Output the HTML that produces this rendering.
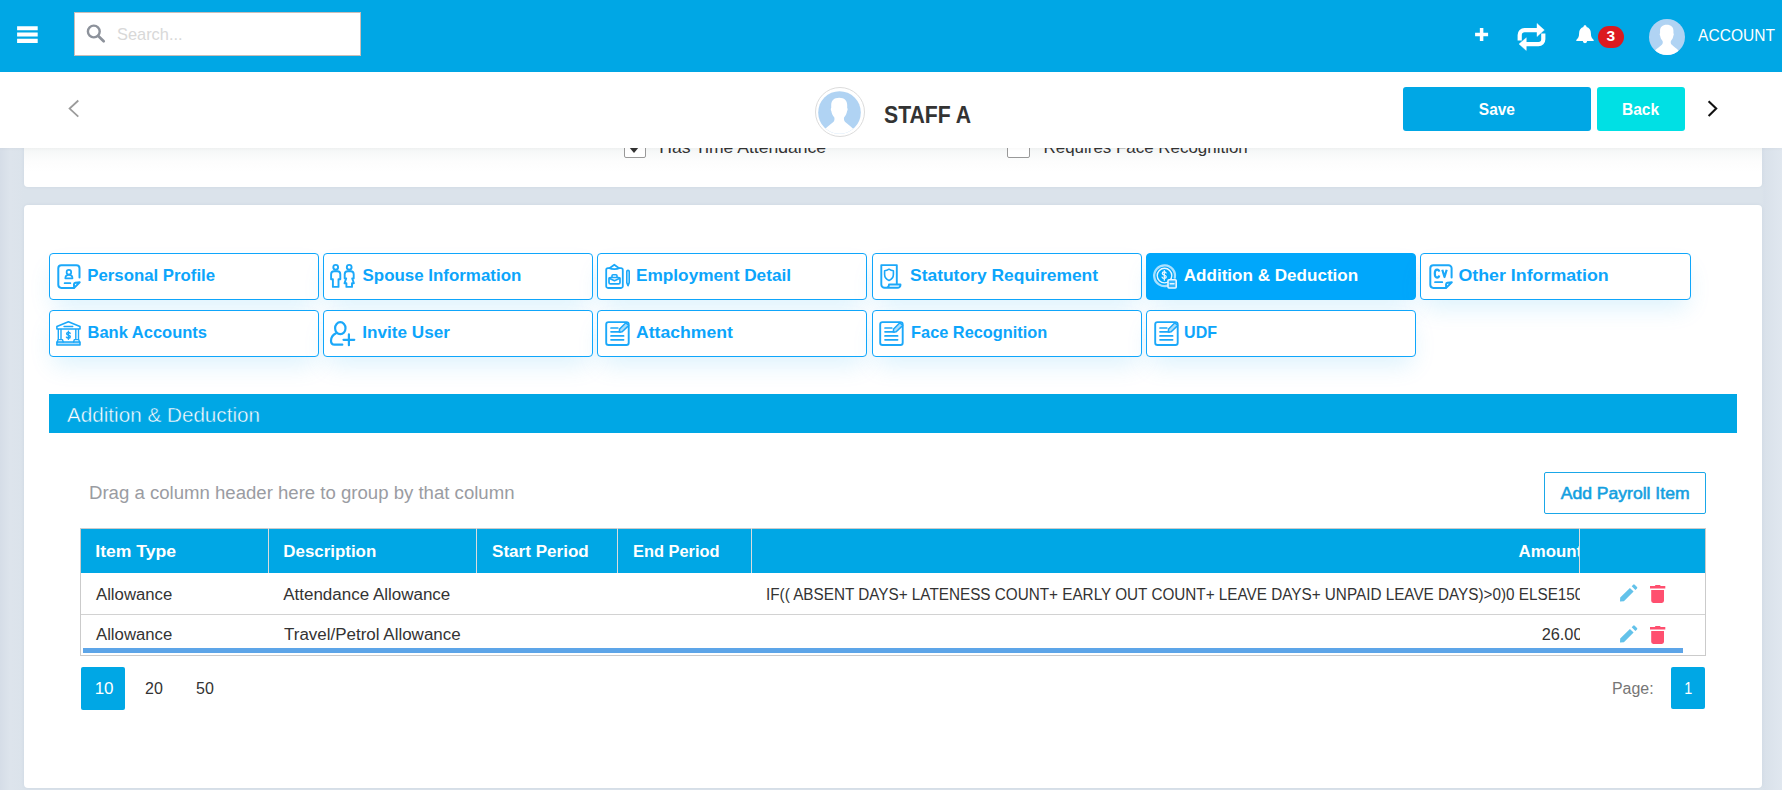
<!DOCTYPE html>
<html>
<head>
<meta charset="utf-8">
<style>
*{box-sizing:border-box;margin:0;padding:0}
html,body{width:1782px;height:790px;overflow:hidden}
body{font-family:"Liberation Sans",sans-serif;background:#dbe3eb;position:relative;color:#333}
.abs{position:absolute}
#bg{left:0;top:0;width:1782px;height:790px;background:linear-gradient(90deg,#d5dde7 0px,#dde4ec 10px,#dbe3eb 24px,#dbe3eb 1762px,#d9e1ea 1764px,#e0e7ef 1782px)}
#top{left:0;top:0;width:1782px;height:72px;background:#00a7e5}
#search{left:74px;top:12px;width:287px;height:44px;background:#fff;border:1px solid #c9bdb9}
#search span{position:absolute;left:42px;top:11px;font-size:17px;color:#d8d8d8;line-height:20px}
#sub{left:0;top:72px;width:1782px;height:76px;background:#fff;box-shadow:0 1px 3px rgba(0,0,0,.035);z-index:5}
.card{background:#fff;border-radius:4px;box-shadow:0 0 3px rgba(110,135,170,.14)}
#card1{left:24px;top:100px;width:1738px;height:87px;background:linear-gradient(#f4f6f6 48px,#fdfdfd 62px,#fff 72px)}
#card2{left:24px;top:205px;width:1738px;height:583px}
.btn{position:absolute;color:#fff;font-weight:bold;font-size:16px;text-align:center;border-radius:3px}
#save{left:1403px;top:87px;width:188px;height:44px;line-height:44px;background:#00a7e5}
#back{left:1597px;top:87px;width:88px;height:44px;line-height:44px;background:#00e0e4}
.tab{position:absolute;height:47px;border:1px solid #0fa6fb;border-radius:4px;background:#fff;color:#0ca5fb;font-weight:bold;font-size:16.5px;box-shadow:0 12px 25px -4px rgba(0,160,240,.14);white-space:nowrap}
.tab.on{background:#00a7fb;color:#fff;border-color:#00a7fb}
.tab .ic{position:absolute;left:-1px;top:-1px}
.tab .tt{position:absolute;left:37.500px;top:10px;line-height:22px;display:inline-block;transform-origin:0 50%}
#sec{left:49px;top:394px;width:1688px;height:39px;background:#00a7e5;color:#fff;font-size:20px;line-height:40px;padding-left:18px;-webkit-text-stroke:.45px #00a7e5}
#drag{left:89px;top:482px;font-size:18px;color:#9a9ca2}
#add{left:1544px;top:472px;width:162px;height:42px;border:1px solid #1aa7e8;border-radius:2px;color:#149fe0;font-size:16.5px;line-height:40px;text-align:center;background:#fff;-webkit-text-stroke:.55px #149fe0}
#grid{left:80px;top:528px;width:1626px;height:128px;border:1px solid #cbcbcb;background:#fff}
#gh{left:81px;top:529px;width:1624px;height:44px;background:#00a7e5}
.th{position:absolute;top:528px;height:45px;line-height:45px;color:#fff;font-weight:bold;font-size:16px;white-space:nowrap}
.vs{position:absolute;top:528px;width:1px;height:45px;background:#dadcdd}
.td{position:absolute;font-size:16px;color:#333;white-space:nowrap;line-height:20px}
#rowline{left:81px;top:614px;width:1624px;height:1px;background:#d2d2d2}
#scroll{left:83px;top:648px;width:1600px;height:5px;background:#5da5e8}
.pg{position:absolute;font-size:16px;color:#333;line-height:42px;text-align:center}
.pg.on{background:#00a7e5;color:#fff;border-radius:2px}
span[id]{display:inline-block;transform-origin:0 50%}
#h4,#d5{transform-origin:100% 50%}
/*FIT*/
#t0{transform:translate(-0.72px,0.00px) scaleX(1.0176)}
#t1{transform:translate(0.54px,0.00px) scaleX(1.0247)}
#t2{transform:translate(0.00px,0.00px) scaleX(1.0440)}
#t3{transform:translate(-0.99px,0.00px) scaleX(1.0573)}
#t4{transform:translate(-1.26px,0.00px) scaleX(1.0345)}
#t5{transform:translate(-0.54px,0.00px) scaleX(1.0783)}
#t6{transform:translate(0.00px,0.00px) scaleX(1.0000)}
#t7{transform:translate(0.27px,0.00px) scaleX(1.0381)}
#t8{transform:translate(0.00px,0.00px) scaleX(1.0682)}
#t9{transform:translate(0.09px,0.00px) scaleX(0.9898)}
#t10{transform:translate(-0.90px,0.00px) scaleX(0.9697)}
#sect{transform:translate(0.00px,0.60px) scaleX(1.0334)}
#dragt{transform:translate(0.00px,1.10px) scaleX(1.0321)}
#addt{transform:translate(-3.33px,-0.30px) scaleX(1.0645)}
#stafft{transform:translate(0.00px,1.10px) scaleX(0.9223)}
#acctt{transform:translate(0.12px,0.00px) scaleX(0.9409)}
#savet{transform:translate(0.81px,0.70px) scaleX(0.9676)}
#backt{transform:translate(0.00px,0.70px) scaleX(0.9711)}
#searcht{transform:translate(0.00px,0.60px) scaleX(0.9638)}
#h0{transform:translate(-0.72px,0.50px) scaleX(1.1000)}
#h1{transform:translate(-0.63px,0.50px) scaleX(1.0552)}
#h2{transform:translate(0.00px,0.50px) scaleX(1.0667)}
#h3{transform:translate(0.00px,0.50px) scaleX(1.0241)}
#d0{transform:translate(0.00px,0.90px) scaleX(1.0452)}
#d1{transform:translate(-0.81px,0.90px) scaleX(1.0612)}
#d3{transform:translate(0.00px,0.30px) scaleX(1.0452)}
#d4{transform:translate(0.00px,0.30px) scaleX(1.0605)}
#p0{transform:translate(0.63px,0.90px) scaleX(1.0625)}
#p1{transform:translate(0.00px,0.90px) scaleX(1.0000)}
#p2{transform:translate(0.00px,0.90px) scaleX(1.0000)}
#p3{transform:translate(0.00px,0.90px) scaleX(0.9956)}
#cb1{transform:translate(1.20px,1.60px) scaleX(1.0330)}
#cb2{transform:translate(1.50px,1.60px) scaleX(0.9960)}
#d2{transform:translate(-1.00px,0.90px) scaleX(0.9547)}
#h4{transform:translate(-3.40px,0.50px) scaleX(1.0500)}
#d5{transform:translate(-3.50px,0.30px) scaleX(1.0210)}
#p4{transform:translate(0.30px,0.90px) scaleX(0.9000)}
/*ENDFIT*/
</style>
</head>
<body>
<div id="bg" class="abs"></div>

<!-- first (scrolled) card -->
<div id="card1" class="abs card"></div>
<div class="abs" style="left:624px;top:135px;width:22px;height:23px;border:1px solid #999;border-radius:2px;background:#fff"></div>
<div class="abs" style="left:629px;top:146.500px;width:0;height:0;border-left:5px solid transparent;border-right:5px solid transparent;border-top:6px solid #333"></div>
<div class="abs" style="left:1007px;top:135px;width:23px;height:23px;border:1px solid #999;border-radius:2px;background:#fff"></div>
<div class="abs" style="left:658px;top:136px;font-size:17px;color:#333;white-space:nowrap"><span id="cb1">Has Time Attendance</span></div>
<div class="abs" style="left:1042px;top:136px;font-size:17px;color:#333;white-space:nowrap"><span id="cb2">Requires Face Recognition</span></div>

<!-- top bar -->
<div id="top" class="abs"></div>
<svg class="abs" style="left:16px;top:24px" width="24" height="22" viewBox="0 0 24 22"><path d="M1.100 2.300 H21.700 V6.300 H1.100z M1.100 8.550 H21.700 V12.600 H1.100z M1.100 14.800 H21.700 V19 H1.100z" fill="#fff"/></svg>
<div id="search" class="abs"><span id="searcht">Search...</span>
<svg class="abs" style="left:10px;top:10px" width="22" height="22" viewBox="0 0 22 22"><circle cx="8.800" cy="8.500" r="5.900" fill="none" stroke="#8d929b" stroke-width="2.400"/><path d="M13.300 13 L18.700 18.300" stroke="#8d929b" stroke-width="2.700" stroke-linecap="round"/></svg>
</div>

<!-- top right icons -->
<svg class="abs" style="left:1474px;top:28px" width="16" height="15" viewBox="0 0 16 15"><path d="M7.600 0.100 V13.100 M1.100 6.600 H14.100" stroke="#fff" stroke-width="3.500" fill="none"/></svg>
<svg class="abs" style="left:1516px;top:22px" width="32" height="30" viewBox="0 0 32 30"><g fill="none" stroke="#fff" stroke-width="4.200" stroke-linecap="butt" stroke-linejoin="round"><path d="M3.700 18.600 V13 a4.800 4.800 0 0 1 4.800-4.800 H22"/><path d="M27.300 11.600 V17.300 a4.800 4.800 0 0 1-4.800 4.800 H9.500"/></g><path d="M21 1.400 L28.300 8.100 L21 14.600z M10.300 15.700 L3 22.100 L10.300 28.500z" fill="#fff" stroke="#fff" stroke-width=".4" stroke-linejoin="round"/></svg>
<svg class="abs" style="left:1575px;top:24px" width="20" height="22" viewBox="0 0 20 22"><path d="M10 1.200 c-.9 0-1.500.6-1.500 1.400 v.5 C5.700 3.800 4.100 6.200 4.100 9.300 c0 3.200-.9 5-2.600 6.400 c-.5.500-.3 1.400.6 1.400 h15.800 c.9 0 1.100-.9.600-1.400 c-1.700-1.400-2.600-3.200-2.600-6.400 c0-3.100-1.600-5.500-4.400-6.200 v-.5 c0-.8-.6-1.400-1.500-1.400z M7.800 16.800 a2.200 2.400 0 0 0 4.400 0z" fill="#fff"/></svg>
<div class="abs" style="left:1598px;top:26px;width:25.600px;height:22px;border-radius:11px;background:#dc1a1f;color:#fff;font-weight:bold;font-size:15.500px;line-height:20px;text-align:center">3</div>
<svg class="abs" style="left:1649px;top:19px" width="36" height="36" viewBox="0 0 43 43"><defs><clipPath id="c2"><circle cx="21.5" cy="21.5" r="21.5"/></clipPath></defs><circle cx="21.5" cy="21.5" r="21.5" fill="#b0d3f3"/><g clip-path="url(#c2)"><path d="M21.200 6.800 C16 6.800 13.200 9.600 13.200 14 V17 C12.600 17.400 12.600 19 13.300 20 C13.600 22.500 14.800 24.600 16.200 26.200 C16.800 28 16.400 29.800 15.300 30.900 C12.500 33.500 9.500 35.400 7 37.900 L3 46 H40 L35.400 37.900 C33 35.400 30 33.500 27.200 30.900 C26 29.800 25.600 28 26.200 26.200 C27.600 24.600 28.800 22.500 29.100 20 C29.800 19 29.800 17.400 29.200 17 V14 C29.200 9.600 26.400 6.800 21.200 6.800z" fill="#fff"/></g></svg>
<div class="abs" id="acct" style="left:1698px;top:25px;font-size:16.500px;color:#fff;white-space:nowrap;line-height:20px"><span id="acctt">ACCOUNT</span></div>

<!-- sub header -->
<div id="sub" class="abs"></div>
<svg class="abs" style="left:64px;top:96px;z-index:6" width="20" height="26" viewBox="0 0 20 26"><path d="M14.3 4.5 L5.6 12.6 L14.3 20.7" fill="none" stroke="#9b9b9b" stroke-width="1.8"/></svg>
<svg class="abs" style="left:1700px;top:96px;z-index:6" width="24" height="26" viewBox="0 0 24 26"><path d="M8.6 5.2 L16.2 12.6 L8.6 20" fill="none" stroke="#111" stroke-width="2.1"/></svg>
<div class="abs" style="left:815px;top:87px;width:50px;height:50px;border-radius:50%;border:1px solid #dcdcdc;background:#fff;z-index:6"></div>
<svg class="abs" style="left:818px;top:90.5px;z-index:6" width="43" height="43" viewBox="0 0 43 43"><defs><clipPath id="c1"><circle cx="21.5" cy="21.5" r="21.3"/></clipPath></defs><circle cx="21.5" cy="21.5" r="21.3" fill="#b0d3f3"/><g clip-path="url(#c1)"><path d="M21.200 6.800 C16 6.800 13.200 9.600 13.200 14 V17 C12.600 17.400 12.600 19 13.300 20 C13.600 22.500 14.800 24.600 16.200 26.200 C16.800 28 16.400 29.800 15.300 30.900 C12.500 33.500 9.500 35.400 7 37.900 L3 46 H40 L35.400 37.900 C33 35.400 30 33.500 27.200 30.900 C26 29.800 25.600 28 26.200 26.200 C27.600 24.600 28.800 22.500 29.100 20 C29.800 19 29.800 17.400 29.200 17 V14 C29.200 9.600 26.400 6.800 21.200 6.800z" fill="#fff"/></g></svg>
<div class="abs" id="staff" style="left:884px;top:100px;font-size:23px;font-weight:bold;color:#333;z-index:6;white-space:nowrap;line-height:28px"><span id="stafft">STAFF A</span></div>
<div id="save" class="btn" style="z-index:6"><span id="savet">Save</span></div>
<div id="back" class="btn" style="z-index:6"><span id="backt">Back</span></div>

<!-- main card -->
<div id="card2" class="abs card"></div>

<!-- tabs -->
<div class="tab" style="left:49px;top:253px;width:270px"><svg class="ic" width="40" height="47" viewBox="0 0 40 47" fill="none" stroke="#1ba8f9" stroke-width="2" stroke-linecap="round" stroke-linejoin="round"><path d="M30.500 24.500 V15.300 a3.100 3.100 0 0 0-3.100-3.100 H12.400 a3.100 3.100 0 0 0-3.100 3.100 V31.800 a3.100 3.100 0 0 0 3.100 3.100 H25.200 L30.700 29.300 C28.500 29.600 26.300 29.300 25.300 30.300 C24.500 31.300 25.200 33 25.200 34.900"/><circle cx="19.900" cy="19.200" r="2.300" stroke-width="1.700"/><path d="M16.300 25.300 c0-2.300 1.500-3.400 3.600-3.400 s3.600 1.100 3.600 3.400z" stroke-width="1.700"/><path d="M15.600 30.200 H21.400" stroke-width="1.700"/></svg><span class="tt" id="t0">Personal Profile</span></div>
<div class="tab" style="left:323px;top:253px;width:270px"><svg class="ic" width="40" height="47" viewBox="0 0 40 47" fill="none" stroke="#1ba8f9" stroke-width="1.900" stroke-linecap="round" stroke-linejoin="round"><circle cx="12.700" cy="14.300" r="2.400"/><path d="M8.100 26.200 V21.300 a3 3 0 0 1 3-3 h3.200 a3 3 0 0 1 3 3 V26.200 h-1.800 V33.900 h-5.600 V26.200z"/><circle cx="26.200" cy="14.300" r="2.400"/><path d="M21.700 25.400 V21.300 a3 3 0 0 1 3-3 h3 a3 3 0 0 1 3 3 V25.400 h-1.500 l1.700 4.800 h-1.900 V33.900 h-5.600 V30.200 h-1.900 l1.700-4.800z"/></svg><span class="tt" id="t1">Spouse Information</span></div>
<div class="tab" style="left:597px;top:253px;width:270px"><svg class="ic" width="40" height="47" viewBox="0 0 40 47" fill="none" stroke="#1ba8f9" stroke-width="2" stroke-linecap="round" stroke-linejoin="round"><path d="M13 15.200 H11 a1.800 1.800 0 0 0-1.800 1.800 V33.200 a1.800 1.800 0 0 0 1.800 1.800 H24 a1.800 1.800 0 0 0 1.800-1.800 V17 a1.800 1.800 0 0 0-1.800-1.800 H22" stroke-width="1.800"/><path d="M12.500 15.200 L17.300 11.700 L22.100 15.200 C20 16.400 14.600 16.400 12.500 15.200z" stroke-width="1.700"/><rect x="12" y="24.500" width="11" height="6.400" rx="1.500" stroke-width="1.700"/><path d="M15 24.300 V22.800 a1 1 0 0 1 1-1 h3 a1 1 0 0 1 1 1 V24.300 M12.200 25.200 L17.500 27.800 L22.800 25.200" stroke-width="1.600"/><path d="M29.800 18.600 a1.200 1.200 0 0 1 2.400 0 V29.600 L31 32.600 L29.800 29.600z" stroke-width="1.600"/></svg><span class="tt" id="t2">Employment Detail</span></div>
<div class="tab" style="left:872px;top:253px;width:270px"><svg class="ic" width="40" height="47" viewBox="0 0 40 47" fill="none" stroke="#1ba8f9" stroke-width="2" stroke-linecap="round" stroke-linejoin="round"><path d="M24.800 31.200 V12.100 H9.300 V31.500 a3.300 3.300 0 0 0 3.300 3.300 H25.500 a3 3 0 0 0 3-3.300 H17 c0 2.200-1.500 3.300-3.600 3.300" stroke-width="1.900"/><path d="M17 16.200 c1.600 1.200 3 1.600 4.400 1.600 v3.800 c0 2.700-1.800 4.800-4.400 5.800 c-2.600-1-4.400-3.100-4.400-5.800 v-3.800 c1.400 0 2.800-.4 4.400-1.600z" stroke-width="1.600"/></svg><span class="tt" id="t3">Statutory Requirement</span></div>
<div class="tab on" style="left:1146px;top:253px;width:270px"><svg class="ic" width="40" height="47" viewBox="0 0 40 47" fill="none" stroke="#eaf6ff" stroke-width="2" stroke-linecap="round" stroke-linejoin="round"><circle cx="18.500" cy="22.600" r="7.300" stroke-width="1.400"/><path d="M21.500 32.700 a10.400 10.400 0 1 1 7.300-8" stroke-width="2.300" opacity=".72"/><path d="M20.100 20 c-.4-.8-1.100-1.100-1.900-1.100 c-1.100 0-1.900.6-1.900 1.600 c0 2.200 3.900 1.100 3.900 3.300 c0 1-.9 1.600-2 1.600 c-.9 0-1.700-.4-2.100-1.200 M18.300 17.600 V27.200" stroke-width="1.300"/><rect x="22" y="26.800" width="8.200" height="8.200" rx="1" stroke-width="1.600" fill="#35b6fc"/><path d="M24.200 30.800 H28" stroke-width="1.600"/></svg><span class="tt" id="t4">Addition &amp; Deduction</span></div>
<div class="tab" style="left:1420px;top:253px;width:271px"><svg class="ic" width="40" height="47" viewBox="0 0 40 47" fill="none" stroke="#1ba8f9" stroke-width="2" stroke-linecap="round" stroke-linejoin="round"><path d="M31.600 24.500 V15.300 a3.100 3.100 0 0 0-3.100-3.100 H13.400 a3.100 3.100 0 0 0-3.100 3.100 V31.800 a3.100 3.100 0 0 0 3.100 3.100 H26.200 L31.800 29.300 C29.600 29.600 27.400 29.300 26.400 30.300 C25.600 31.300 26.200 33 26.200 34.900"/><path d="M19.200 18.700 c-.2-1.400-1-2.100-2.100-2.100 c-1.500 0-2.300 1.400-2.300 4 s.8 4 2.300 4 c1.100 0 1.900-.7 2.100-2.100 M22.300 16.800 L24.500 24 L26.700 16.800" stroke-width="2.200" stroke-linecap="butt" stroke-linejoin="round"/><path d="M15 29.200 H22.300" stroke-width="1.700"/></svg><span class="tt" id="t5">Other Information</span></div>
<div class="tab" style="left:49px;top:310px;width:270px"><svg class="ic" width="40" height="47" viewBox="0 0 40 47" fill="none" stroke="#1ba8f9" stroke-width="2" stroke-linecap="round" stroke-linejoin="round"><path d="M7.900 16.600 L19.400 11.700 L31 16.600 V19 H7.900z" stroke-width="1.600"/><path d="M15 16.500 H23.800" stroke-width="1.300"/><path d="M7.900 35 V32 H31 V35z" stroke-width="1.600" fill="#a9dcfb"/><path d="M9.300 19.500 V29.500 M12 19.500 V29.500 M26.800 19.500 V29.500 M29.500 19.500 V29.500 M8.300 32 L9 29.600 H13.500 L14.200 32 M24.600 32 L25.300 29.600 H29.800 L30.500 32" stroke-width="1.400"/><path d="M21.200 23.400 c-.3-.7-1-1-1.800-1 c-1.100 0-1.800.5-1.800 1.400 c0 2 3.700 1 3.700 3 c0 .9-.8 1.500-1.900 1.500 c-.9 0-1.600-.4-2-1.100 M19.400 21.300 V29.300" stroke-width="1.400"/></svg><span class="tt" id="t6">Bank Accounts</span></div>
<div class="tab" style="left:323px;top:310px;width:270px"><svg class="ic" width="40" height="47" viewBox="0 0 40 47" fill="none" stroke="#1ba8f9" stroke-width="2.200" stroke-linecap="round" stroke-linejoin="round"><ellipse cx="17.300" cy="18.200" rx="5.200" ry="6"/><path d="M13 23.300 C9.700 25 8 27.800 8 30.800 C8 33.300 9.300 34.700 11.600 34.700 H19.300"/><path d="M25.900 24.400 V35.200 M20.500 29.800 H31.300" stroke-width="2.200"/></svg><span class="tt" id="t7">Invite User</span></div>
<div class="tab" style="left:597px;top:310px;width:270px"><svg class="ic" width="40" height="47" viewBox="0 0 40 47" fill="none" stroke="#1ba8f9" stroke-width="2" stroke-linecap="round" stroke-linejoin="round"><rect x="9.200" y="12.100" width="22.500" height="22.900" rx="2.300" stroke-width="1.900"/><path d="M14 18 H20.800 M14 21.800 H23.600 M14 25.900 H26.600 M14 29.800 H26.600" stroke-width="1.700"/><path d="M28.900 12.800 L31.600 15.600 L25.200 21.700 L22.300 22 L22.600 19z" stroke-width="1.500" fill="#a9dcfb"/></svg><span class="tt" id="t8">Attachment</span></div>
<div class="tab" style="left:872px;top:310px;width:270px"><svg class="ic" style="left:-1.800px" width="40" height="47" viewBox="0 0 40 47" fill="none" stroke="#1ba8f9" stroke-width="2" stroke-linecap="round" stroke-linejoin="round"><rect x="9.200" y="12.100" width="22.500" height="22.900" rx="2.300" stroke-width="1.900"/><path d="M14 18 H20.800 M14 21.800 H23.600 M14 25.900 H26.600 M14 29.800 H26.600" stroke-width="1.700"/><path d="M28.900 12.800 L31.600 15.600 L25.200 21.700 L22.300 22 L22.600 19z" stroke-width="1.500" fill="#a9dcfb"/></svg><span class="tt" id="t9">Face Recognition</span></div>
<div class="tab" style="left:1146px;top:310px;width:270px"><svg class="ic" width="40" height="47" viewBox="0 0 40 47" fill="none" stroke="#1ba8f9" stroke-width="2" stroke-linecap="round" stroke-linejoin="round"><rect x="9.200" y="12.100" width="22.500" height="22.900" rx="2.300" stroke-width="1.900"/><path d="M14 18 H20.800 M14 21.800 H23.600 M14 25.900 H26.600 M14 29.800 H26.600" stroke-width="1.700"/><path d="M28.900 12.800 L31.600 15.600 L25.200 21.700 L22.300 22 L22.600 19z" stroke-width="1.500" fill="#a9dcfb"/></svg><span class="tt" id="t10">UDF</span></div>

<div id="sec" class="abs"><span id="sect">Addition &amp; Deduction</span></div>
<div id="drag" class="abs"><span id="dragt">Drag a column header here to group by that column</span></div>
<div id="add" class="abs"><span id="addt">Add Payroll Item</span></div>

<div id="grid" class="abs"></div>
<div id="gh" class="abs"></div>
<div id="rowline" class="abs"></div>
<div id="scroll" class="abs"></div>
<!-- table -->
<div class="th" style="left:96px"><span id="h0">Item Type</span></div>
<div class="th" style="left:284px"><span id="h1">Description</span></div>
<div class="th" style="left:492px"><span id="h2">Start Period</span></div>
<div class="th" style="left:633px"><span id="h3">End Period</span></div>
<div class="abs" style="left:752px;top:528px;width:827px;height:45px;overflow:hidden"><div class="th" style="top:0;left:auto;right:-6px"><span id="h4">Amount</span></div></div>
<div class="vs" style="left:268px"></div><div class="vs" style="left:476px"></div><div class="vs" style="left:617px"></div><div class="vs" style="left:751px"></div><div class="vs" style="left:1579px"></div>
<div class="td" style="left:96px;top:584px"><span id="d0">Allowance</span></div>
<div class="td" style="left:284px;top:584px"><span id="d1">Attendance Allowance</span></div>
<div class="abs" style="left:752px;top:574px;width:828px;height:40px;overflow:hidden"><div class="td" style="left:15px;top:10px"><span id="d2">IF(( ABSENT DAYS+ LATENESS COUNT+ EARLY OUT COUNT+ LEAVE DAYS+ UNPAID LEAVE DAYS)&gt;0)0 ELSE150</span></div></div>
<div class="td" style="left:96px;top:625px"><span id="d3">Allowance</span></div>
<div class="td" style="left:284px;top:625px"><span id="d4">Travel/Petrol Allowance</span></div>
<div class="abs" style="left:752px;top:615px;width:828px;height:33px;overflow:hidden"><div class="td" style="left:auto;right:-6px;top:10px"><span id="d5">26.00</span></div></div>
<!-- row icons -->
<svg class="abs" style="left:1619px;top:583px" width="20" height="20" viewBox="0 0 20 20"><path d="M1.200 14.600 L10.900 4.900 L14.600 8.600 L4.900 18.300 L1 18.600z M12.700 3.200 L14.200 1.700 a1.100 1.100 0 0 1 1.500 0 L18 4 a1.100 1.100 0 0 1 0 1.500 L16.400 7z" fill="#63c2ea"/></svg>
<svg class="abs" style="left:1649px;top:583px" width="18" height="21" viewBox="0 0 18 21"><path d="M1 3 H5.800 L6.500 1.900 H11 L11.700 3 H16.300 V5.500 H1z M2.200 7 H15 V17.800 a2.100 2.100 0 0 1-2.100 2.100 H4.300 a2.100 2.100 0 0 1-2.100-2.100z" fill="#ff4f6f"/></svg>
<svg class="abs" style="left:1619px;top:624px" width="20" height="20" viewBox="0 0 20 20"><path d="M1.200 14.600 L10.900 4.900 L14.600 8.600 L4.900 18.300 L1 18.600z M12.700 3.200 L14.200 1.700 a1.100 1.100 0 0 1 1.500 0 L18 4 a1.100 1.100 0 0 1 0 1.500 L16.400 7z" fill="#63c2ea"/></svg>
<svg class="abs" style="left:1649px;top:624px" width="18" height="21" viewBox="0 0 18 21"><path d="M1 3 H5.800 L6.500 1.900 H11 L11.700 3 H16.300 V5.500 H1z M2.200 7 H15 V17.800 a2.100 2.100 0 0 1-2.100 2.100 H4.300 a2.100 2.100 0 0 1-2.100-2.100z" fill="#ff4f6f"/></svg>
<!-- pager -->
<div class="pg on" style="left:81px;top:667px;width:44px;height:43px"><span id="p0">10</span></div>
<div class="pg" style="left:132px;top:667px;width:44px;height:43px"><span id="p1">20</span></div>
<div class="pg" style="left:183px;top:667px;width:44px;height:43px"><span id="p2">50</span></div>
<div class="pg" style="left:1612px;top:667px;color:#767676;white-space:nowrap"><span id="p3">Page:</span></div>
<div class="pg on" style="left:1671px;top:667px;width:34px;height:42px"><span id="p4">1</span></div>

</body>
</html>
